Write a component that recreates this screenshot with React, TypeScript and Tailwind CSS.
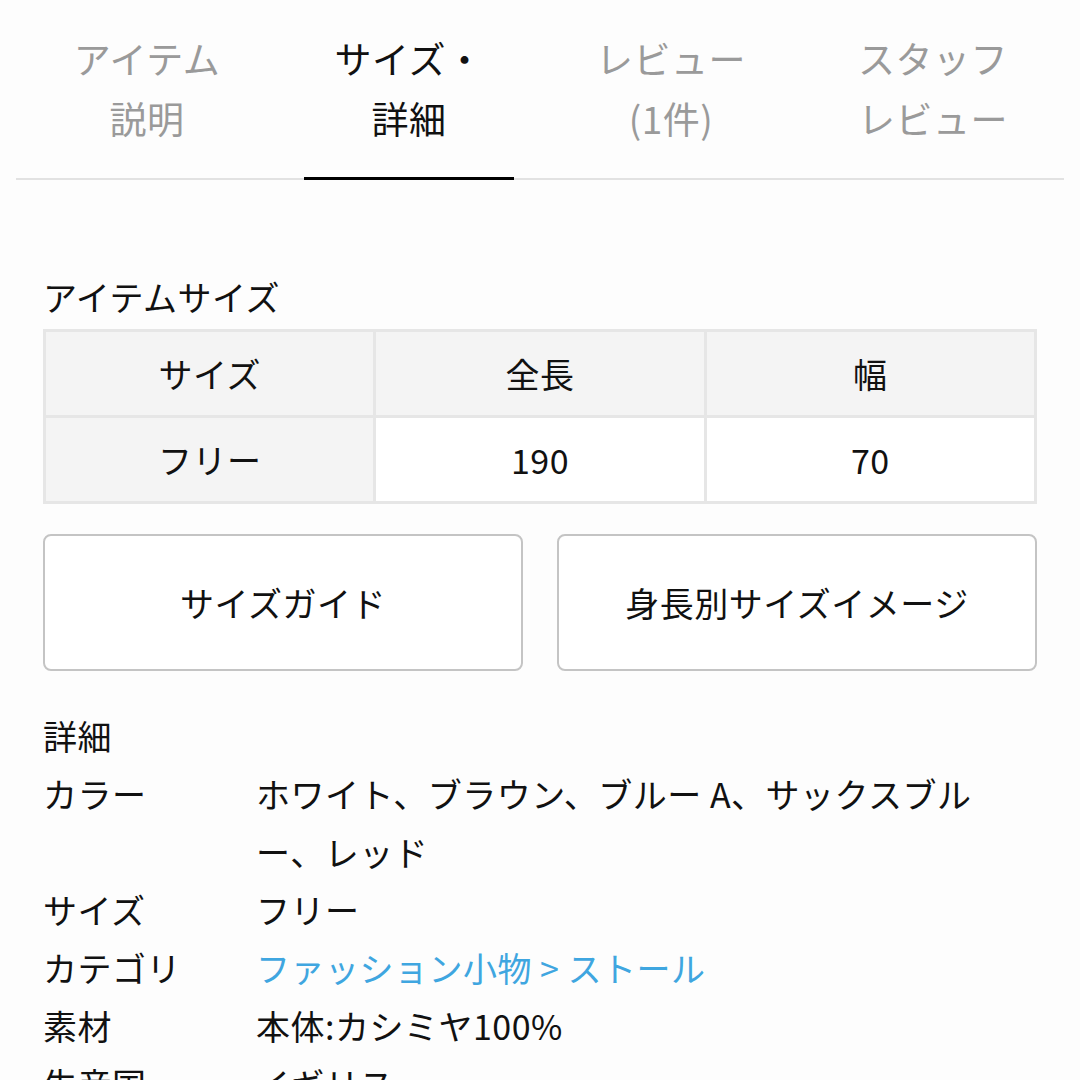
import React from "react";

const font = { fontFamily: '"Noto Sans CJK JP", "Noto Sans", sans-serif' };

const tabs = [
  { l1: "アイテム", l2: "説明", active: false },
  { l1: "サイズ・", l2: "詳細", active: true },
  { l1: "レビュー", l2: "(1件)", active: false },
  { l1: "スタッフ", l2: "レビュー", active: false },
];

const details: { label: string; value: string; link?: boolean }[] = [
  { label: "カラー", value: "ホワイト、ブラウン、ブルー A、サックスブルー、レッド" },
  { label: "サイズ", value: "フリー" },
  { label: "カテゴリ", value: "ファッション小物 > ストール", link: true },
  { label: "素材", value: "本体:カシミヤ100%" },
  { label: "生産国", value: "イギリス" },
];

export default function App() {
  return (
    <div className="w-[1080px] h-[1080px] overflow-hidden bg-[#fdfdfd] text-[#111]" style={font}>
      <div className="px-[16px]">
        <div className="flex border-b-2 border-[#e2e2e2]">
          {tabs.map((t, i) => (
            <div key={i} className="relative flex-1 pt-[28px] pb-[30px] text-center text-[37px] leading-[60px] tracking-[0.5px]">
              <div className={t.active ? "text-[#111]" : "text-[#9a9a9a]"}>{t.l1}</div>
              <div className={t.active ? "text-[#111]" : "text-[#9a9a9a]"}>{t.l2}</div>
              {t.active && <div className="absolute left-[10%] w-[80%] bottom-[-2px] h-[3px] bg-black" />}
            </div>
          ))}
        </div>
      </div>

      <div className="px-[43px] pt-[95px] tracking-[0.5px]">
        <div className="text-[34px] leading-[44px] mb-[10px]">アイテムサイズ</div>
        <div className="grid grid-cols-3 gap-[3px] p-[3px] bg-[#e6e6e6] text-[34px]">
          <div className="h-[83px] flex items-center justify-center bg-[#f4f4f4]">サイズ</div>
          <div className="h-[83px] flex items-center justify-center bg-[#f4f4f4]">全長</div>
          <div className="h-[83px] flex items-center justify-center bg-[#f4f4f4]">幅</div>
          <div className="h-[83px] flex items-center justify-center bg-[#f4f4f4]">フリー</div>
          <div className="h-[83px] flex items-center justify-center bg-white">190</div>
          <div className="h-[83px] flex items-center justify-center bg-white">70</div>
        </div>

        <div className="flex gap-[34px] mt-[30px]">
          <div className="flex-1 h-[137px] flex items-center justify-center border-2 border-[#c4c4c4] rounded-[8px] bg-white text-[34px]">
            サイズガイド
          </div>
          <div className="flex-1 h-[137px] flex items-center justify-center border-2 border-[#c4c4c4] rounded-[8px] bg-white text-[34px]">
            身長別サイズイメージ
          </div>
        </div>

        <div className="mt-[36px] text-[34px] leading-[58px]">
          <div>詳細</div>
          {details.map((d) => (
            <div key={d.label} className="flex">
              <div className="w-[213px] shrink-0">{d.label}</div>
              <div className={"flex-1 pr-[40px] " + (d.link ? "text-[#3fa6e0]" : "")}>{d.value}</div>
            </div>
          ))}
        </div>
      </div>
    </div>
  );
}
